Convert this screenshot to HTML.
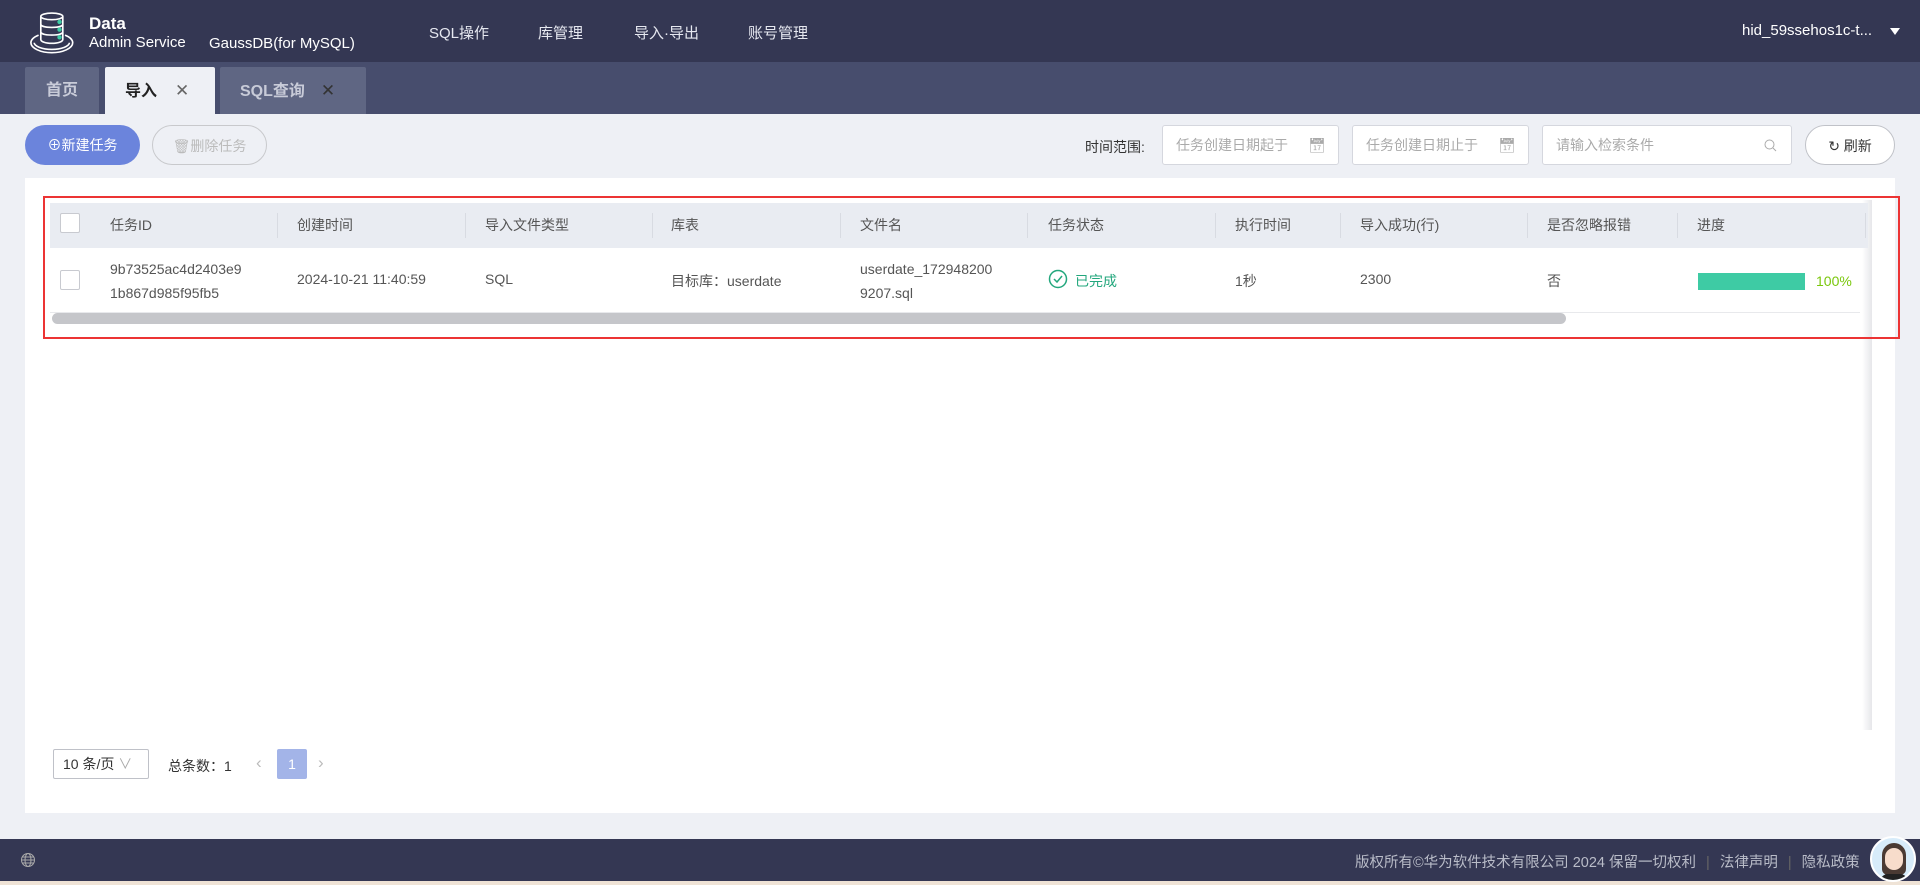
<!DOCTYPE html>
<html><head><meta charset="utf-8"><style>
*{margin:0;padding:0;box-sizing:border-box}
body{width:1920px;height:885px;overflow:hidden;background:#eef0f5;font-family:"Liberation Sans","Noto Sans CJK SC",sans-serif;font-size:14px;color:#333;position:relative}
.abs{position:absolute}
.hdr{left:0;top:0;width:1920px;height:62px;background:#343753;color:#fff}
.tabs{left:0;top:62px;width:1920px;height:52px;background:#474d6d}
.tab{position:absolute;top:5px;height:47px;line-height:47px;font-size:16px;font-weight:bold;color:#c8cbd8;background:#5f6683;border-radius:2px 2px 0 0}
.btn{position:absolute;top:125px;height:40px;border-radius:20px;line-height:40px;text-align:center;font-size:14px}
.inp{position:absolute;top:125px;height:40px;border:1px solid #d5d7de;border-radius:3px;background:#fff;color:#aaa;line-height:38px;padding-left:13px;font-size:14px}
.th{position:absolute;top:203px;height:45px;line-height:45px;color:#555;font-size:14px}
.sep{position:absolute;top:213px;width:1px;height:25px;background:#d8dbe2}
.td{position:absolute;color:#555;font-size:14px}
</style></head><body>
<div class="abs hdr">
<svg class="abs" style="left:28px;top:12px" width="52" height="44" viewBox="0 0 46 40">
<g fill="none" stroke="#fff" stroke-width="1.5">
<ellipse cx="21" cy="4" rx="10" ry="3"/>
<path d="M11 4v21c0 2 4.5 3.5 10 3.5s10-1.5 10-3.5V4M11 11c0 2 4.5 3 10 3s10-1 10-3M11 18c0 2 4.5 3 10 3s10-1 10-3"/>
<path d="M9 21c-5 2-7 4-7 7 0 5 9 9 19 9s19-4 19-9c0-3-2-5-7-7M5 28c0 3 7 6 16 6s16-3 16-6"/>
</g>
<circle cx="28" cy="9" r="2" fill="#3ecba4"/><circle cx="28" cy="16" r="2" fill="#3ecba4"/><circle cx="28" cy="23" r="2" fill="#3ecba4"/>
</svg>
<div class="abs" style="left:89px;top:14px;font-size:17px;font-weight:bold">Data</div>
<div class="abs" style="left:89px;top:34px;font-size:15px">Admin Service</div>
<div class="abs" style="left:209px;top:35px;font-size:15px">GaussDB(for MySQL)</div>
<div class="abs" style="left:429px;top:22px;font-size:15px;color:#e6e8f0">SQL操作</div>
<div class="abs" style="left:538px;top:22px;font-size:15px;color:#e6e8f0">库管理</div>
<div class="abs" style="left:634px;top:22px;font-size:15px;color:#e6e8f0">导入·导出</div>
<div class="abs" style="left:748px;top:22px;font-size:15px;color:#e6e8f0">账号管理</div>
<div class="abs" style="left:1742px;top:22px;font-size:15px">hid_59ssehos1c-t...</div>
<div class="abs" style="left:1890px;top:28px;width:0;height:0;border-left:5px solid transparent;border-right:5px solid transparent;border-top:7px solid #fff"></div>
</div>
<div class="abs tabs">
<div class="tab" style="left:25px;width:74px;text-align:center">首页</div>
<div class="tab" style="left:105px;width:110px;background:#eef0f5;color:#222;padding-left:20px">导入<span style="font-weight:normal;color:#666;margin-left:18px;font-size:17px">✕</span></div>
<div class="tab" style="left:220px;width:146px;padding-left:20px">SQL查询<span style="font-weight:normal;color:#333;margin-left:16px;font-size:17px">✕</span></div>
</div>
<div class="btn" style="left:25px;width:115px;background:#6b84dc;color:#fff">⊕新建任务</div>
<div class="btn" style="left:152px;width:115px;border:1px solid #c8c9cc;color:#bbb">🗑删除任务</div>
<div class="abs" style="left:1085px;top:137px;color:#333">时间范围:</div>
<div class="inp" style="left:1162px;width:177px">任务创建日期起于 <span style="position:absolute;right:12px">📅︎</span></div>
<div class="inp" style="left:1352px;width:177px">任务创建日期止于 <span style="position:absolute;right:12px">📅︎</span></div>
<div class="inp" style="left:1542px;width:250px">请输入检索条件<svg style="position:absolute;right:14px;top:13px" width="13" height="13"><circle cx="5.5" cy="5.5" r="4.5" fill="none" stroke="#aaa"/><path d="M9 9l3 3" stroke="#aaa"/></svg></div>
<div class="btn" style="left:1805px;width:90px;border:1px solid #c0c2c8;background:#fff;color:#333">↻ 刷新</div>
<div class="abs" style="left:25px;top:178px;width:1870px;height:635px;background:#fff"></div>
<div class="abs" style="left:1862px;top:200px;width:10px;height:530px;background:linear-gradient(to right,#fff,#e6e7ea)"></div>
<div class="abs" style="left:50px;top:203px;width:1818px;height:45px;background:#e9ecf2"></div>
<div class="abs" style="left:60px;top:213px;width:20px;height:20px;border:1px solid #c8cad0;border-radius:2px;background:#fff"></div>
<div class="th" style="left:110px">任务ID</div>
<div class="sep" style="left:277px"></div><div class="th" style="left:297px">创建时间</div>
<div class="sep" style="left:465px"></div><div class="th" style="left:485px">导入文件类型</div>
<div class="sep" style="left:652px"></div><div class="th" style="left:671px">库表</div>
<div class="sep" style="left:840px"></div><div class="th" style="left:860px">文件名</div>
<div class="sep" style="left:1027px"></div><div class="th" style="left:1048px">任务状态</div>
<div class="sep" style="left:1215px"></div><div class="th" style="left:1235px">执行时间</div>
<div class="sep" style="left:1340px"></div><div class="th" style="left:1360px">导入成功(行)</div>
<div class="sep" style="left:1527px"></div><div class="th" style="left:1547px">是否忽略报错</div>
<div class="sep" style="left:1677px"></div><div class="th" style="left:1697px">进度</div>
<div class="sep" style="left:1865px"></div>
<div class="abs" style="left:60px;top:270px;width:20px;height:20px;border:1px solid #c8cad0;border-radius:2px"></div>
<div class="td" style="left:110px;top:257px;line-height:24px">9b73525ac4d2403e9<br>1b867d985f95fb5</div>
<div class="td" style="left:297px;top:271px">2024-10-21 11:40:59</div>
<div class="td" style="left:485px;top:271px">SQL</div>
<div class="td" style="left:671px;top:271px">目标库：userdate</div>
<div class="td" style="left:860px;top:257px;line-height:24px">userdate_172948200<br>9207.sql</div>
<svg class="abs" style="left:1048px;top:269px" width="20" height="20"><circle cx="10" cy="10" r="8.5" fill="none" stroke="#23a77d" stroke-width="1.5"/><path d="M6 10l3 3 5-6" fill="none" stroke="#23a77d" stroke-width="1.5"/></svg>
<div class="td" style="left:1075px;top:271px;color:#23a77d">已完成</div>
<div class="td" style="left:1235px;top:271px">1秒</div>
<div class="td" style="left:1360px;top:271px">2300</div>
<div class="td" style="left:1547px;top:271px">否</div>
<div class="abs" style="left:1698px;top:273px;width:107px;height:17px;background:#3ecba4"></div>
<div class="td" style="left:1816px;top:273px;color:#7ac70c">100%</div>
<div class="abs" style="left:50px;top:312px;width:1810px;height:1px;background:#e8e9ec"></div>
<div class="abs" style="left:52px;top:313px;width:1514px;height:11px;background:#c5c6ca;border-radius:6px"></div>
<div class="abs" style="left:43px;top:196px;width:1857px;height:143px;border:2px solid #ec3434"></div>
<div class="abs" style="left:53px;top:749px;width:96px;height:30px;border:1px solid #bfc1c8;border-radius:2px;line-height:28px;padding-left:9px;color:#333">10 条/页 <span style="color:#aaa">∨</span></div>
<div class="abs" style="left:168px;top:756px;color:#333">总条数：1</div>
<div class="abs" style="left:256px;top:753px;color:#bbb;font-size:17px">‹</div>
<div class="abs" style="left:277px;top:749px;width:30px;height:30px;background:#a3b4e8;border-radius:2px;color:#fff;text-align:center;line-height:30px">1</div>
<div class="abs" style="left:318px;top:753px;color:#bbb;font-size:17px">›</div>
<div class="abs" style="left:0;top:839px;width:1920px;height:42px;background:#343753"></div>
<div class="abs" style="left:0;top:881px;width:1920px;height:4px;background:#efe3d6"></div>
<svg class="abs" style="left:20px;top:852px" width="16" height="16"><g fill="none" stroke="#aaa"><circle cx="8" cy="8" r="6.5"/><ellipse cx="8" cy="8" rx="3" ry="6.5"/><path d="M1.5 8h13M2.5 5h11M2.5 11h11"/></g></svg>
<div class="abs" style="left:1355px;top:851px;color:#b9bcc8;font-size:14.5px;white-space:nowrap">版权所有©华为软件技术有限公司 2024 保留一切权利 <span style="color:#666;margin:0 6px">|</span> 法律声明 <span style="color:#666;margin:0 6px">|</span> 隐私政策</div>
<div class="abs" style="left:1870px;top:836px;width:46px;height:46px;border-radius:50%;background:#d7ecfa;border:2px solid #fff;overflow:hidden">
<div class="abs" style="left:10px;top:5px;width:24px;height:32px;border-radius:12px 12px 6px 6px;background:#4a3a33"></div>
<div class="abs" style="left:13px;top:10px;width:18px;height:22px;border-radius:9px;background:#f7dccb"></div>
<div class="abs" style="left:8px;top:36px;width:28px;height:12px;border-radius:8px 8px 0 0;background:#222"></div>
</div>
</body></html>
